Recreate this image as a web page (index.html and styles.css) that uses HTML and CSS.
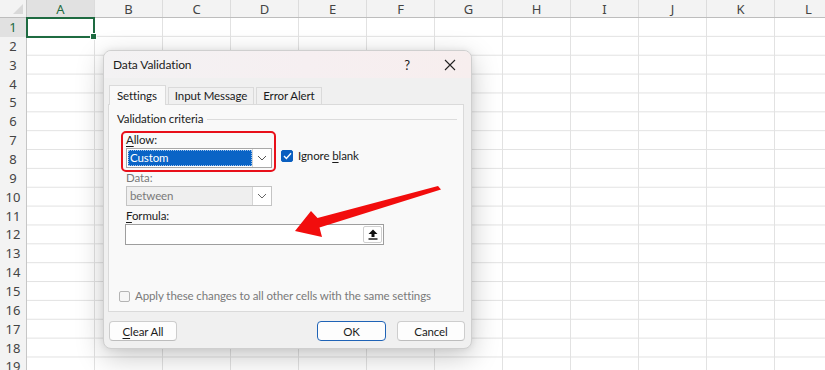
FILE: index.html
```html
<!DOCTYPE html>
<html lang="en">
<head>
  <meta charset="UTF-8">
  <title>Data Validation</title>
  <link rel="stylesheet" href="styles.css">
</head>
<body>
  <div class="sheet">
    <div class="corner"><span class="corner-tri"></span></div>

    <!-- column headers -->
    <div class="col-heads">
      <div class="col-head active">A</div>
      <div class="col-head">B</div>
      <div class="col-head">C</div>
      <div class="col-head">D</div>
      <div class="col-head">E</div>
      <div class="col-head">F</div>
      <div class="col-head">G</div>
      <div class="col-head">H</div>
      <div class="col-head">I</div>
      <div class="col-head">J</div>
      <div class="col-head">K</div>
      <div class="col-head">L</div>
    </div>

    <!-- row headers -->
    <div class="row-heads">
      <div class="row-head active">1</div>
      <div class="row-head">2</div>
      <div class="row-head">3</div>
      <div class="row-head">4</div>
      <div class="row-head">5</div>
      <div class="row-head">6</div>
      <div class="row-head">7</div>
      <div class="row-head">8</div>
      <div class="row-head">9</div>
      <div class="row-head">10</div>
      <div class="row-head">11</div>
      <div class="row-head">12</div>
      <div class="row-head">13</div>
      <div class="row-head">14</div>
      <div class="row-head">15</div>
      <div class="row-head">16</div>
      <div class="row-head">17</div>
      <div class="row-head">18</div>
      <div class="row-head">19</div>
    </div>

    <div class="cells">
      <div class="selection"><span class="fill-handle"></span></div>
    </div>
  </div>

  <!-- Data Validation dialog -->
  <div class="dialog">
    <div class="titlebar">
      <span class="title">Data Validation</span>
      <span class="help">?</span>
      <span class="close">
        <svg width="12" height="12" viewBox="0 0 12 12"><path d="M1 1 L11 11 M11 1 L1 11" stroke="#222" stroke-width="1.1" fill="none"/></svg>
      </span>
    </div>

    <div class="dialog-body">
      <div class="tabs">
        <div class="tab active">Settings</div>
        <div class="tab">Input Message</div>
        <div class="tab">Error Alert</div>
      </div>

      <div class="panel">
        <div class="group-title"><span>Validation criteria</span></div>

        <div class="fields">
          <div class="allow-row">
            <div class="field allow">
              <div class="field-label"><u>A</u>llow:</div>
              <div class="select">
                <span class="select-value highlighted">Custom</span>
                <span class="select-btn">
                  <svg width="10" height="6" viewBox="0 0 10 6"><path d="M1 1 L5 5 L9 1" stroke="#555" stroke-width="1" fill="none"/></svg>
                </span>
              </div>
            </div>
            <label class="check">
              <span class="box checked">
                <svg width="9" height="8" viewBox="0 0 9 8"><path d="M1 4 L3.4 6.4 L8 1.3" stroke="#fff" stroke-width="1.4" fill="none"/></svg>
              </span>
              <span>Ignore <u>b</u>lank</span>
            </label>
          </div>

          <div class="field">
            <div class="field-label disabled">Data:</div>
            <div class="select disabled">
              <span class="select-value">between</span>
              <span class="select-btn">
                <svg width="10" height="6" viewBox="0 0 10 6"><path d="M1 1 L5 5 L9 1" stroke="#666" stroke-width="1" fill="none"/></svg>
              </span>
            </div>
          </div>

          <div class="field">
            <div class="field-label"><u>F</u>ormula:</div>
            <div class="formula">
              <span class="collapse-btn">
                <svg width="10" height="11" viewBox="0 0 10 11"><path d="M5 0.5 L9.5 5 L6.5 5 L6.5 8 L3.5 8 L3.5 5 L0.5 5 Z" fill="#111"/><rect x="0.5" y="9.3" width="9" height="1.4" fill="#111"/></svg>
              </span>
            </div>
          </div>
        </div>

        <label class="check apply">
          <span class="box"></span>
          <span>Apply these changes to all other cells with the same settings</span>
        </label>
      </div>

      <div class="buttons">
        <button class="btn"><u>C</u>lear All</button>
        <span class="spacer"></span>
        <button class="btn default">OK</button>
        <button class="btn">Cancel</button>
      </div>
    </div>
  </div>

  <!-- annotation arrow -->
  <svg class="arrow" width="160" height="60" viewBox="290 182 160 60">
    <polygon points="295,231 311,211 317.5,218 438,186 441,189.5 319.5,227.5 322,237" fill="#f20d0d"/>
  </svg>
</body>
</html>
```

FILE: styles.css
```css
body {
  margin: 0;
  width: 825px;
  height: 370px;
  overflow: hidden;
  position: relative;
  background: #fff;
  font-family: "Noto Sans", "Open Sans", sans-serif;
}

/* ---------- sheet ---------- */

.sheet {
  display: grid;
  grid-template-columns: 27px 1fr;
  grid-template-rows: 18px 352px;
  height: 370px;
  overflow: hidden;
}

.corner {
  background: #f3f3f3;
  border-right: 1px solid #c6c6c6;
  border-bottom: 1px solid #bdbdbd;
  position: relative;
}

.corner-tri {
  position: absolute;
  right: 3px;
  bottom: 3px;
  width: 0;
  height: 0;
  border-left: 10px solid transparent;
  border-bottom: 10px solid #d9d9d9;
}

.col-heads {
  display: flex;
  background: #f3f3f3;
  border-bottom: 1px solid #bdbdbd;
}

.col-head {
  flex: 0 0 68px;
  box-sizing: border-box;
  border-right: 1px solid #dcdcdc;
  text-align: center;
  font-size: 13px;
  line-height: 18px;
  color: #444;
}

.col-head.active {
  background: #e1e1e1;
  color: #1e6b41;
}

.row-heads {
  display: flex;
  flex-direction: column;
  background: #f3f3f3;
  border-right: 1px solid #c6c6c6;
  overflow: hidden;
}

.row-head {
  flex: 0 0 18.87px;
  min-height: 0;
  overflow: hidden;
  text-align: center;
  font-size: 13px;
  line-height: 19px;
  color: #444;
}

.row-head.active {
  background: #e1e1e1;
  color: #1e6b41;
}

.cells {
  position: relative;
  background-image:
    linear-gradient(to right, transparent 67px, #e2e2e2 67px),
    linear-gradient(to bottom, transparent 17.87px, #e2e2e2 17.87px);
  background-size: 68px 100%, 100% 18.87px;
}

.selection {
  position: absolute;
  left: -1px;
  top: -1px;
  width: 69px;
  height: 21px;
  box-sizing: border-box;
  border: 2px solid #1e6b41;
}

.fill-handle {
  position: absolute;
  right: -4px;
  bottom: -4px;
  width: 5px;
  height: 5px;
  background: #1e6b41;
  border: 1px solid #fff;
}

/* ---------- dialog ---------- */

.dialog {
  position: absolute;
  left: 103px;
  top: 50px;
  width: 369px;
  height: 299px;
  box-sizing: border-box;
  border: 1px solid #cfcfcf;
  border-radius: 8px;
  background: #f0f0f0;
  box-shadow: 0 8px 28px rgba(0, 0, 0, 0.22), 0 0 6px rgba(0, 0, 0, 0.08);
  overflow: hidden;
  font-family: Lato, "Noto Sans", sans-serif;
  font-size: 11.5px;
  letter-spacing: -0.1px;
  color: #1b1b1b;
}

.titlebar {
  height: 27px;
  display: flex;
  align-items: center;
  background: linear-gradient(90deg, #f3f2f3 0%, #f6eff1 55%, #f7eeee 100%);
}

.title {
  flex: 1;
  padding-left: 9px;
  font-size: 12px;
}

.help {
  width: 20px;
  text-align: center;
  margin-right: 23px;
  font-size: 13px;
}

.close {
  width: 20px;
  display: flex;
  justify-content: center;
  margin-right: 11px;
}

.dialog-body {
  padding: 9px 6px 7px 4px;
}

.tabs {
  display: flex;
  gap: 2px;
  padding-left: 1px;
  height: 17px;
  position: relative;
  z-index: 1;
}

.tab {
  box-sizing: border-box;
  height: 17px;
  padding: 0 6px;
  line-height: 16px;
  border: 1px solid #dadada;
  border-bottom: none;
  background: #f0f0f0;
}

.tab.active {
  height: 20px;
  margin-top: -2px;
  line-height: 20px;
  background: #f9f9f9;
  padding: 0 8px 0 7px;
}

.panel {
  height: 208px;
  box-sizing: border-box;
  border: 1px solid #dadada;
  background: #f9f9f9;
  padding: 7px 0 8px 8px;
  margin-right: 1px;
  display: flex;
  flex-direction: column;
}

.group-title {
  display: flex;
  align-items: center;
  gap: 4px;
  line-height: 14px;
  margin-right: 6px;
}

.group-title::after {
  content: "";
  flex: 1;
  height: 1px;
  background: #dcdcdc;
}

.fields {
  margin: 7px 0 0 9px;
  display: flex;
  flex-direction: column;
  gap: 3px;
}

.allow-row {
  display: flex;
  align-items: flex-end;
  gap: 9px;
}

.field {
  display: flex;
  flex-direction: column;
  gap: 1px;
}

.field-label {
  line-height: 14px;
}

.field-label.disabled {
  color: #7a7a7a;
}

.allow {
  position: relative;
}

/* red annotation frame */
.allow::before {
  content: "";
  position: absolute;
  left: -5px;
  top: -2px;
  right: -4px;
  bottom: -4px;
  border: 2px solid #e8101a;
  border-radius: 5px;
}

.select {
  width: 146px;
  height: 20px;
  box-sizing: border-box;
  border: 1px solid #a8a8a8;
  background: #fff;
  display: flex;
}

.select-value {
  flex: 1;
  padding-left: 3px;
  line-height: 18px;
}

.select-value.highlighted {
  margin: 1px 0 1px 1px;
  padding-left: 2px;
  line-height: 16px;
  background: #0a64c6;
  color: #fff;
  outline: 1px dotted #9ec3ee;
  outline-offset: -1px;
}

.select-btn {
  width: 18px;
  border-left: 1px solid #d4d4d4;
  display: flex;
  align-items: center;
  justify-content: center;
}

.select.disabled {
  background: #efefef;
  border-color: #c4c4c4;
  color: #7a7a7a;
}

.select.disabled .select-btn {
  background: #fff;
}

.formula {
  width: 259px;
  height: 21px;
  margin-left: -1px;
  box-sizing: border-box;
  border: 1px solid #9e9e9e;
  background: #fff;
  display: flex;
  justify-content: flex-end;
  align-items: center;
  padding-right: 1px;
}

.collapse-btn {
  width: 19px;
  height: 17px;
  box-sizing: border-box;
  border: 1px solid #cfcfcf;
  border-radius: 2px;
  display: flex;
  align-items: center;
  justify-content: center;
}

.check {
  display: flex;
  align-items: center;
  gap: 5px;
  line-height: 14px;
  margin-bottom: 5px;
  white-space: nowrap;
}

.box {
  width: 12px;
  height: 12px;
  box-sizing: border-box;
  border-radius: 2px;
  border: 1px solid #8a8a8a;
  background: #fff;
  display: flex;
  align-items: center;
  justify-content: center;
}

.box.checked {
  background: #0a5fc0;
  border-color: #0a5fc0;
}

.check.apply {
  margin: auto 0 0 2px;
  color: #7a7a7a;
}

.check.apply .box {
  width: 11px;
  height: 11px;
  border-color: #b4b4b4;
  background: #f6f6f6;
}

.buttons {
  display: flex;
  margin-top: 9px;
  gap: 11px;
  padding-left: 1px;
}

.spacer {
  flex: 1;
}

.btn {
  width: 68px;
  height: 20px;
  padding: 0;
  font: inherit;
  letter-spacing: inherit;
  color: #1b1b1b;
  background: #fdfdfd;
  border: 1px solid #cdcdcd;
  border-bottom-color: #bdbdbd;
  border-radius: 4px;
}

.btn.default {
  width: 69px;
  border: 1px solid #1f63b6;
}

u {
  text-decoration-thickness: 1px;
  text-underline-offset: 2px;
}

/* ---------- annotation ---------- */

.arrow {
  position: absolute;
  left: 290px;
  top: 182px;
  pointer-events: none;
}
```
